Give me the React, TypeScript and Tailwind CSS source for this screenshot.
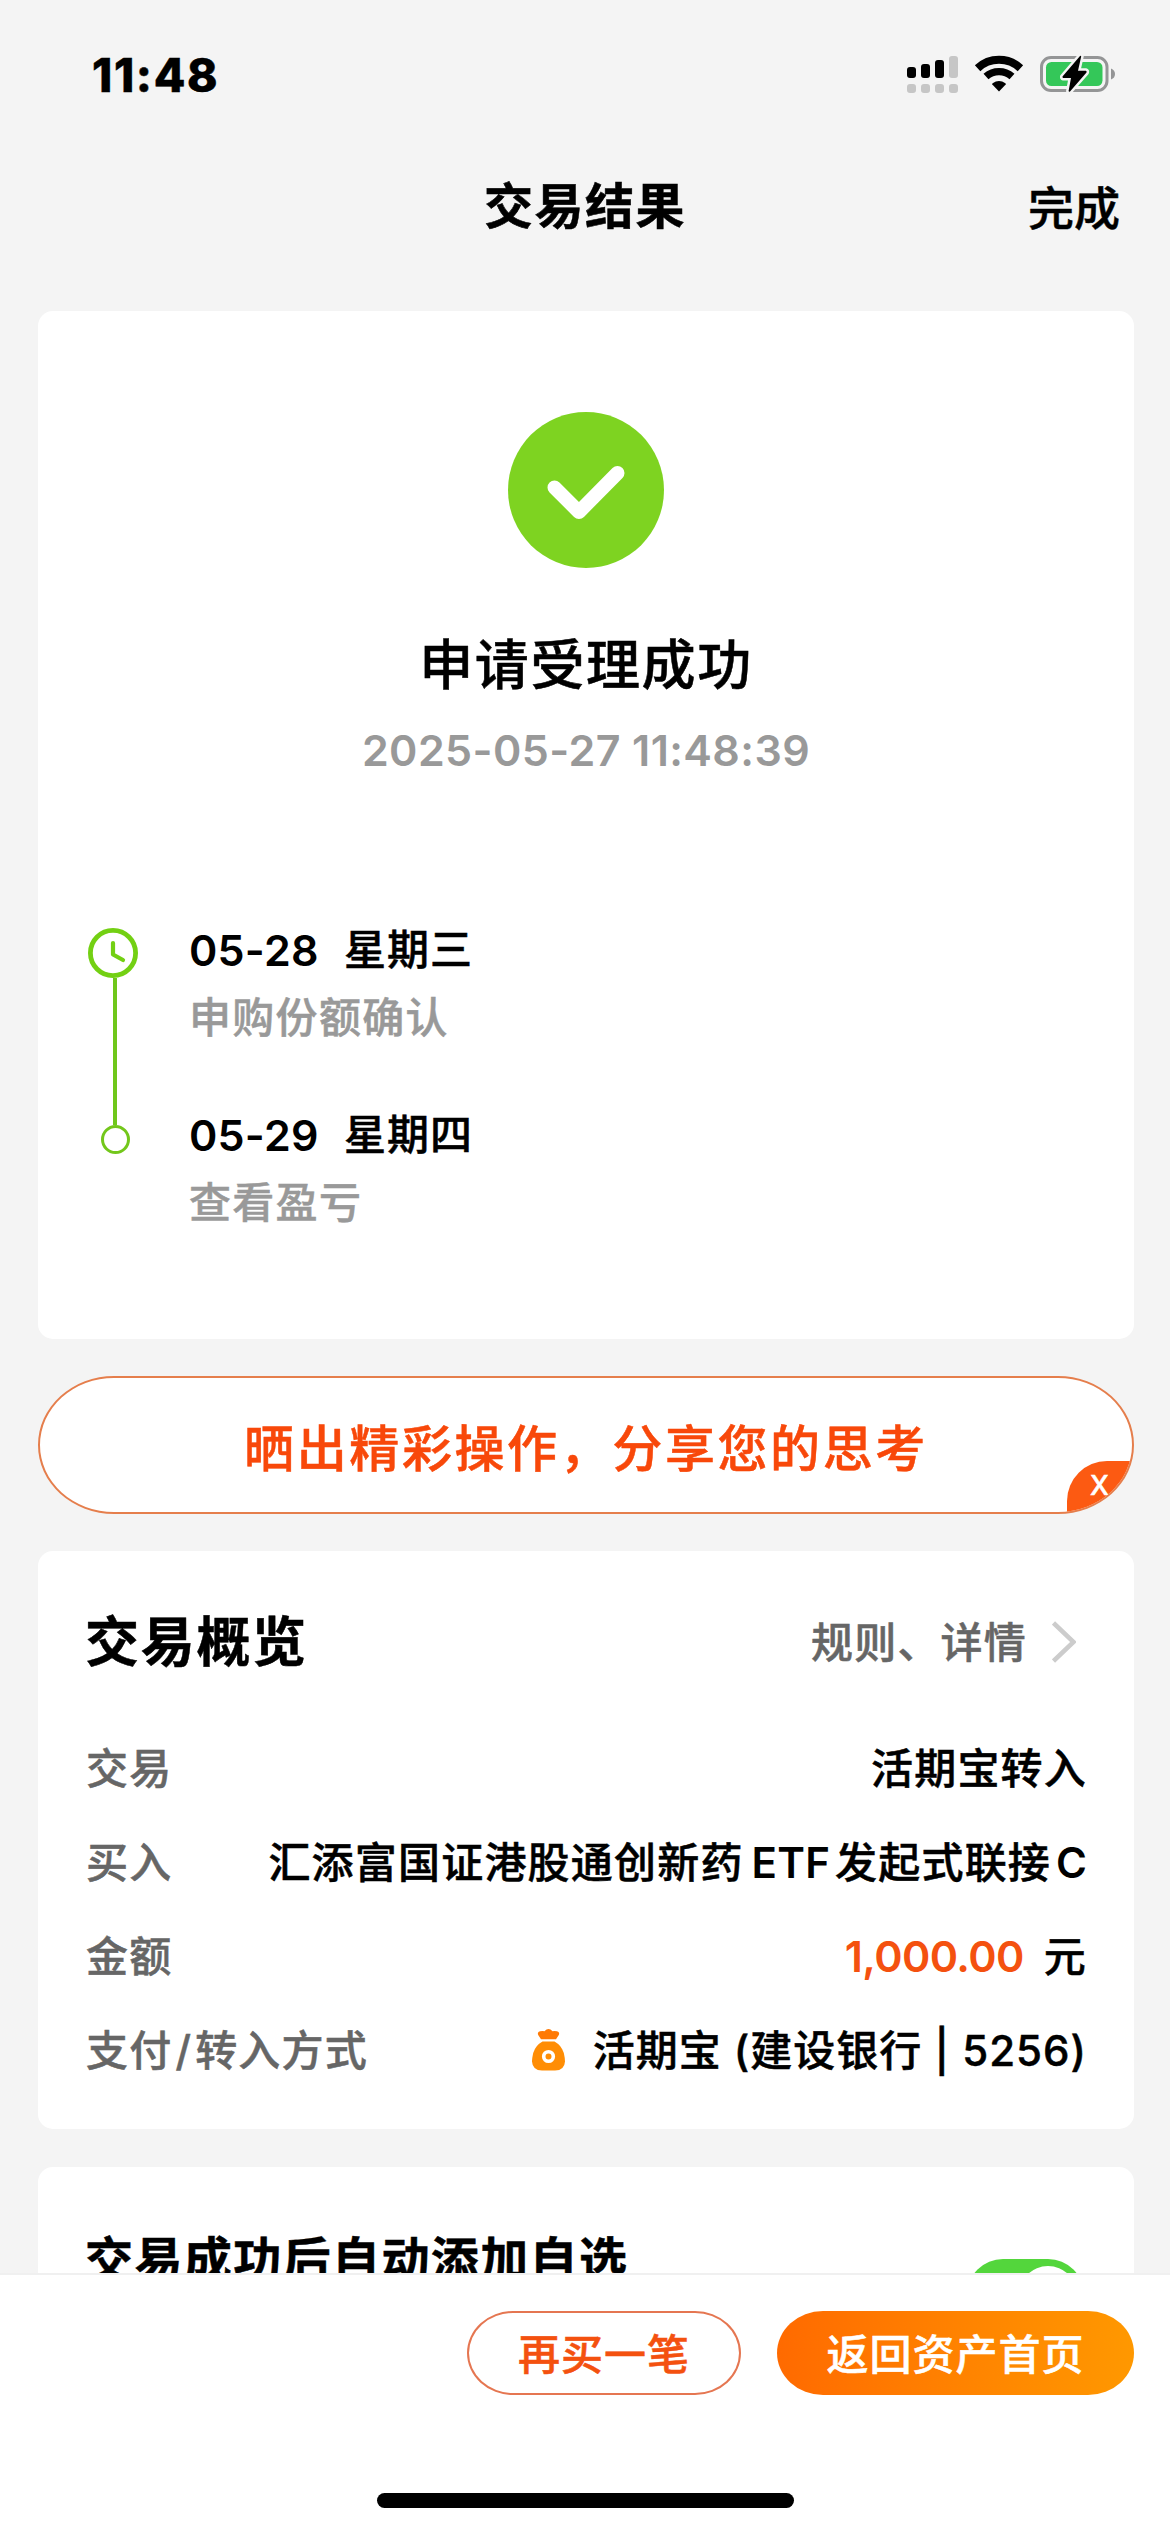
import type { ReactNode } from "react";

function SignalIcon() {
  return (
    <svg width="52" height="38" viewBox="0 0 52 38" className="shrink-0">
      <rect x="0" y="12" width="9" height="11" rx="3" fill="#000" />
      <rect x="14" y="9" width="9" height="14" rx="3" fill="#000" />
      <rect x="28" y="5" width="9" height="18" rx="3" fill="#000" />
      <rect x="42" y="1" width="9" height="22" rx="3" fill="#c6c6c6" />
      {[0, 14, 28, 42].map((x) => (
        <rect key={x} x={x} y="29" width="9" height="9" rx="3" fill="#c6c6c6" />
      ))}
    </svg>
  );
}

function WifiIcon() {
  return (
    <svg width="50" height="38" viewBox="0 0 50 38" className="shrink-0">
      <path d="M3.6 13.2 A31.5 31.5 0 0 1 46.4 13.2" fill="none" stroke="#000" strokeWidth="8" />
      <path d="M12 21.6 A19.5 19.5 0 0 1 38 21.6" fill="none" stroke="#000" strokeWidth="7.4" />
      <path d="M25 36.4 L18.3 29.6 Q17.8 28.8 18.6 28.2 Q25 24 31.4 28.2 Q32.2 28.8 31.7 29.6 Z" fill="#000" />
    </svg>
  );
}

function BatteryIcon() {
  return (
    <svg width="76" height="40" viewBox="0 0 76 40" className="shrink-0">
      <rect x="1.5" y="3.5" width="65.5" height="33" rx="9.5" fill="none" stroke="#949596" strokeWidth="3" />
      <rect x="6" y="8" width="56.5" height="24" rx="5.5" fill="#34c759" />
      <path d="M71 14.5 Q75 16 75 20 Q75 24 71 25.5 Z" fill="#949596" />
      <path
        d="M40 2 L22.5 22.5 Q22.2 23.8 23.3 24 H31 L28.6 37 Q29 38.2 30 37.4 L46.5 18.5 Q47 17 45.8 16.8 H38 L41.2 2.4 Q40.8 1.4 40 2 Z"
        fill="#000"
        stroke="#f4f4f4"
        strokeWidth="5"
        strokeLinejoin="round"
        paintOrder="stroke"
      />
    </svg>
  );
}

function ClockIcon() {
  return (
    <svg width="50" height="50" viewBox="0 0 50 50">
      <circle cx="25" cy="25" r="22.6" fill="none" stroke="#73d013" strokeWidth="4.8" />
      <path d="M25 15 V26.5 L35 32" fill="none" stroke="#73d013" strokeWidth="4.2" strokeLinecap="round" strokeLinejoin="round" />
    </svg>
  );
}

function MoneyBagIcon() {
  return (
    <svg width="33" height="42" viewBox="0 0 33 42" className="shrink-0">
      <path
        d="M9 10.2 L6.2 6 Q5 3 8 2.2 Q11 1.8 12.5 2.2 Q14.5 0 16.5 0 Q18.5 0 20.5 2.2 Q22 1.8 25 2.2 Q28 3 26.8 6 L24 10.2 Z"
        fill="#ff7a05"
      />
      <path
        d="M10.5 12.6 H22.5 Q29.5 16.5 31.8 24 Q33 29 33 32.5 Q32.5 41.3 23 41.6 H10 Q0.5 41.3 0 32.5 Q0 29 1.2 24 Q3.5 16.5 10.5 12.6 Z"
        fill="#ff8d04"
      />
      <circle cx="16.5" cy="27.5" r="4.8" fill="#ff8d04" stroke="#fff" strokeWidth="3.6" />
    </svg>
  );
}

function StatusBar() {
  return (
    <header className="flex h-[132px] items-start justify-between pt-[54px] pr-[54px] pl-[92px]">
      <div className="text-[46px] leading-[42px] font-extrabold tracking-[1.6px]">11:48</div>
      <div className="flex items-center">
        <SignalIcon />
        <div className="w-[15px]" />
        <WifiIcon />
        <div className="w-[16px]" />
        <BatteryIcon />
      </div>
    </header>
  );
}

function Row({ label, children }: { label: ReactNode; children: ReactNode }) {
  return (
    <div className="flex h-[94px] items-center justify-between whitespace-nowrap text-[42px] font-medium tracking-[1.2px]">
      <span className="text-[#666]">{label}</span>
      <span className="-mr-[2px] flex items-center text-black">{children}</span>
    </div>
  );
}

const steps = [
  { date: "05-28", day: "星期三", text: "申购份额确认" },
  { date: "05-29", day: "星期四", text: "查看盈亏" },
];

export default function App() {
  return (
    <div
      lang="zh-CN"
      className="relative flex h-[2532px] w-[1170px] flex-col overflow-hidden bg-[#f4f4f4] font-['Inter','Noto_Sans_CJK_SC',sans-serif] text-black [-webkit-text-stroke:0.5px]"
    >
      <StatusBar />

      {/* Nav bar */}
      <nav className="grid h-[179px] shrink-0 grid-cols-3 items-start px-[50px] pt-[45px] leading-[60px]">
        <h1 className="col-start-2 text-center text-[49px] font-bold tracking-[1.5px]">交易结果</h1>
        <button className="text-right text-[46px] leading-[62px] font-medium">完成</button>
      </nav>

      <main className="flex min-h-0 flex-1 flex-col overflow-hidden pr-[36px] pl-[38px]">
        {/* Result */}
        <section className="h-[1028px] shrink-0 rounded-[15px] bg-white pt-[101px]">
          <div className="flex flex-col items-center">
            <svg width="156" height="156" viewBox="0 0 156 156">
              <circle cx="78" cy="78" r="78" fill="#7ed321" />
              <path d="M46.5 75.5 L71 100 L109.5 61" fill="none" stroke="#fff" strokeWidth="14" strokeLinecap="round" strokeLinejoin="round" />
            </svg>
            <h2 className="mt-[63px] text-[54px] leading-[70px] font-medium tracking-[1.6px]">申请受理成功</h2>
            <p className="mt-[24px] text-[43px] leading-[50px] font-semibold tracking-[0.4px] text-[#999] [-webkit-text-stroke:0px]">
              2025-05-27 11:48:39
            </p>
          </div>

          <div className="mt-[153px] flex pl-[50px]">
            <div className="flex w-[50px] flex-col items-center">
              <ClockIcon />
              <div className="ml-[4px] h-[147px] w-[4px] bg-[#6fc71b]" />
              <div className="ml-[5px] size-[29px] rounded-full border-[3px] border-[#73c71b]" />
            </div>
            <div className="ml-[51px] flex flex-col">
              {steps.map((step) => (
                <div key={step.date} className="h-[185px] whitespace-nowrap font-medium">
                  <div className="flex leading-[44px]">
                    <span className="w-[155px] text-[43px] font-semibold tracking-[0.2px] [-webkit-text-stroke:0px]">{step.date}</span>
                    <span className="text-[42px] tracking-[1px]">{step.day}</span>
                  </div>
                  <div className="mt-[24px] text-[42px] leading-[44px] tracking-[1.3px] text-[#999]">{step.text}</div>
                </div>
              ))}
            </div>
          </div>
        </section>

        {/* Share banner */}
        <div className="relative mt-[37px] flex h-[138px] shrink-0 items-center justify-center overflow-hidden rounded-[76px/69px] border-2 border-[#e57e4c] bg-white">
          <span className="mt-[8px] text-[50px] font-medium tracking-[2.6px] text-[#f8480a]">晒出精彩操作，分享您的思考</span>
          <button className="absolute right-0 bottom-0 flex h-[51px] w-[65px] items-center rounded-tl-[40px] bg-[#fc5a12] pl-[23px] text-[27px] font-medium text-white">
            X
          </button>
        </div>

        {/* Overview */}
        <section className="mt-[37px] h-[578px] shrink-0 rounded-[15px] bg-white pt-[51px] pr-[49px] pl-[48px]">
          <div className="flex h-[80px] items-center justify-between">
            <h3 className="-ml-px text-[54px] font-bold tracking-[1.7px]">交易概览</h3>
            <div className="mr-[9px] flex items-center text-[42px] font-medium tracking-[1.2px] text-[#666]">
              规则、详情
              <svg width="24" height="42" viewBox="0 0 24 42" className="ml-[25px]">
                <path d="M1.5 2 L21.5 21 L1.5 40" fill="none" stroke="#ccc" strokeWidth="4.5" />
              </svg>
            </div>
          </div>
          <div className="mt-[39px]">
            <Row label="交易">活期宝转入</Row>
            <Row label="买入">
              汇添富国证港股通创新药
              <span className="mr-[5px] ml-[8px] font-semibold tracking-[0.2px] [-webkit-text-stroke:0px]">ETF</span>
              发起式联接
              <span className="ml-[5px] font-semibold tracking-normal [-webkit-text-stroke:0px]">C</span>
            </Row>
            <Row label="金额">
              <span className="mr-[20px] text-[43px] font-semibold tracking-[-0.6px] text-[#f4510f] [-webkit-text-stroke:0px]">1,000.00</span>元
            </Row>
            <Row
              label={
                <>
                  支付<span className="mx-[3px]">/</span>转入方式
                </>
              }
            >
              <MoneyBagIcon />
              <span className="ml-[28px] tracking-[1px]">活期宝 (建设银行 | 5256)</span>
            </Row>
          </div>
        </section>

        {/* Auto watchlist */}
        <section className="mt-[38px] flex h-[240px] shrink-0 justify-between rounded-[15px] bg-white pt-[61px] pr-[50px] pl-[48px]">
          <h3 className="-ml-px text-[48px] leading-[64px] font-bold tracking-[1.4px]">交易成功后自动添加自选</h3>
          <div className="mt-[31px] flex h-[72px] w-[117px] items-center justify-end rounded-full bg-[#53d63c] pr-[7px]">
            <div className="size-[58px] rounded-full bg-white" />
          </div>
        </section>
      </main>

      {/* Bottom actions */}
      <footer className="flex h-[259px] shrink-0 flex-col border-t-2 border-[#f0f0f0] bg-white">
        <div className="flex justify-end gap-[36px] pt-[36px] pr-[36px] text-[42px] font-medium tracking-[1px]">
          <button className="h-[84px] w-[274px] rounded-[46px/42px] border-2 border-[#e57651] pt-[3px] text-[#f4510f]">再买一笔</button>
          <button className="h-[84px] w-[357px] rounded-[46px/42px] bg-linear-to-r from-[#ff6a00] to-[#ff9800] pt-[3px] text-white">返回资产首页</button>
        </div>
        <div className="mx-auto mt-[98px] h-[15px] w-[417px] rounded-full bg-black" />
      </footer>
    </div>
  );
}
